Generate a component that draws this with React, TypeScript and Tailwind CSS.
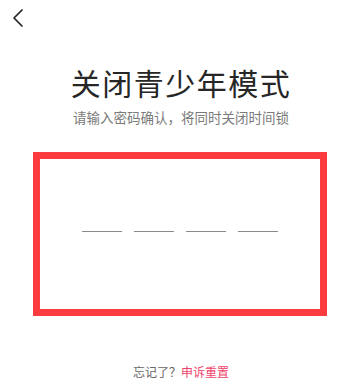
export default function App() {
  return (
    <div
      className="relative h-[386px] w-[362px] overflow-hidden bg-white"
      style={{ fontFamily: '"Noto Sans CJK SC", "Noto Sans", sans-serif' }}
    >
      <button className="absolute left-[10px] top-[8px] text-[#222]">
        <svg width="16" height="20" viewBox="0 0 16 20" fill="none" stroke="currentColor" strokeWidth="1.7" strokeLinecap="round" strokeLinejoin="round">
          <polyline points="12,2 4,10 12,18" />
        </svg>
      </button>

      <div className="flex flex-col items-center pt-[62px]">
        <h1 className="text-[30px] leading-[40px] tracking-[1.5px] text-[#262626]">关闭青少年模式</h1>
        <p className="mt-[6px] text-[13.5px] leading-[18px] text-[#7a7a7a]">
          请输入密码确认，将同时关闭时间锁
        </p>

        <div className="mt-[26px] ml-[-3px] flex h-[164px] w-[294px] items-center justify-center border-[7px] border-[#fb3b3e]">
          <div className="mt-[-5px] flex gap-[12px]">
            <span className="h-[1.5px] w-[40px] bg-[#8a8a8a]" />
            <span className="h-[1.5px] w-[40px] bg-[#8a8a8a]" />
            <span className="h-[1.5px] w-[40px] bg-[#8a8a8a]" />
            <span className="h-[1.5px] w-[40px] bg-[#8a8a8a]" />
          </div>
        </div>

        <p className="mt-[48px] text-[12px] leading-[16px] text-[#666]">
          忘记了？<span className="text-[#f0446c]">申诉重置</span>
        </p>
      </div>
    </div>
  );
}
